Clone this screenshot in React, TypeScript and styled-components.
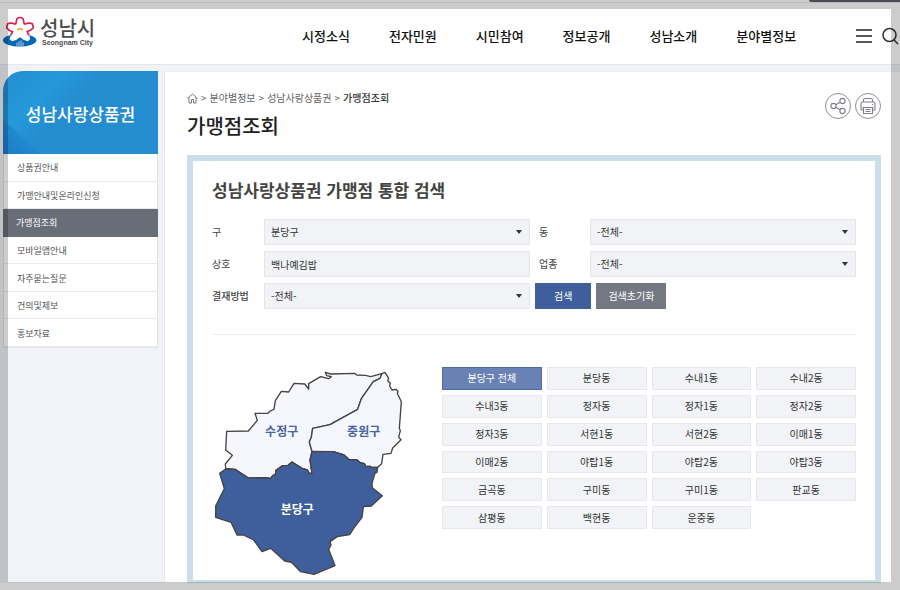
import React from "react";
import styled, { createGlobalStyle, css } from "styled-components";

const GlobalStyle = createGlobalStyle`
  *, *::before, *::after { box-sizing: border-box; }
  body {
    margin: 0;
    background: #fff;
    color: #444;
    font-family: "Noto Sans CJK KR", "Noto Sans", sans-serif;
    font-size: 10px;
    line-height: 16px;
  }
  button, input, select { font: inherit; color: inherit; }
  a { color: inherit; text-decoration: none; }
  h1, h2, ul, ol { margin: 0; padding: 0; }
  ul, ol { list-style: none; }
`;

const Page = styled.div`
  display: flex;
  flex-direction: column;
  min-height: 100vh;
  padding-bottom: 7px;
`;

const Frame = styled.div`
  position: fixed;
  inset: 0;
  border: solid rgba(0, 0, 0, 0.2);
  border-width: 9px 9px 8px 8px;
  pointer-events: none;
`;

const TopStrip = styled.div`
  display: flex;
  justify-content: flex-end;
  height: 3px;
  border-bottom: 1px solid #ececec;
`;

const TopTab = styled.div`
  width: 91px;
  height: 2px;
  border-bottom-left-radius: 2px;
  background: #5e5e70;
`;

const Header = styled.header`
  display: flex;
  align-items: center;
  height: 62px;
  padding: 4px 1px 0 3px;
  border-bottom: 1px solid #e5e8ee;
`;

const Logo = styled.a`
  display: flex;
  align-items: center;
  gap: 3px;
  margin-top: -8px;
`;

const LogoText = styled.span`
  display: flex;
  flex-direction: column;
  color: #4d4d4f;
`;

const LogoName = styled.span`
  font-size: 20px;
  line-height: 22px;
  font-weight: 500;
`;

const LogoSub = styled.span`
  padding-left: 2px;
  font-family: "Liberation Sans", Arial, sans-serif;
  font-size: 7px;
  line-height: 8px;
  font-weight: 700;
`;

const MainNav = styled.nav`
  flex: 1;
  display: flex;
  justify-content: center;
  gap: 39px;
  padding-left: 147px;
  color: #111;
  font-size: 13px;
  line-height: 20px;
  font-weight: 500;
  white-space: nowrap;
`;

const Tools = styled.div`
  display: flex;
  align-items: center;
  gap: 9px;
`;

const IconButton = styled.button`
  display: flex;
  padding: 0;
  border: 0;
  background: none;
  color: #333;
  cursor: pointer;
`;

const RoundButton = styled(IconButton)`
  align-items: center;
  justify-content: center;
  width: 26px;
  height: 26px;
  border: 1px solid #8d9095;
  border-radius: 50%;
  color: #7c8087;
`;

const Body = styled.div`
  flex: 1;
  display: flex;
  background: #f2f3f8;
`;

const Sidebar = styled.aside`
  flex: 0 0 164px;
  padding: 6px 6px 0 3px;
`;

const Banner = styled.h2`
  display: flex;
  align-items: center;
  justify-content: center;
  height: 83px;
  padding-top: 2px;
  border-top-left-radius: 20px;
  background:
    linear-gradient(43deg, #1d7cc6 0, #2189cf 25px, transparent 26px),
    linear-gradient(135deg, #248dd0 0, #2499da 45px, #248dd0 70px);
  color: #fff;
  font-size: 17px;
  line-height: 24px;
  font-weight: 500;
`;

const SideList = styled.ul`
  display: grid;
  grid-auto-rows: 1fr;
  height: 194px;
  border: 1px solid #e2e4e8;
  border-top: 0;
  background: #fff;
`;

const SideLink = styled.a<{ $active?: boolean }>`
  display: flex;
  align-items: center;
  height: 100%;
  padding: 2px 0 0 13px;
  border-bottom: 1px solid #e9eaec;
  color: #555;
  font-size: 9px;
  ${(p) =>
    p.$active &&
    css`
      margin: 0 -1px;
      background: #696d78;
      border-color: #696d78;
      color: #fff;
    `}
`;

const Main = styled.main`
  flex: 1;
  min-width: 0;
  display: flex;
  flex-direction: column;
  margin-top: 6px;
  padding: 18px 19px 0 22px;
  border-left: 1px solid #e4e6e9;
  border-top: 1px solid #f0f0f2;
  background: #fff;
`;

const TitleRow = styled.div`
  display: flex;
  justify-content: space-between;
  align-items: flex-start;
  height: 65px;
`;

const Crumbs = styled.ol`
  display: flex;
  align-items: center;
  gap: 3px;
  height: 16px;
  color: #666;
`;

const Crumb = styled.li<{ $current?: boolean }>`
  display: flex;
  font-weight: ${(p) => (p.$current ? 500 : 400)};
  color: ${(p) => (p.$current ? "#333" : "inherit")};
`;

const Title = styled.h1`
  margin-top: 5px;
  color: #222;
  font-size: 20px;
  line-height: 30px;
  font-weight: 500;
`;

const RoundGroup = styled.div`
  display: flex;
  gap: 4px;
  padding-top: 3px;
`;

const Panel = styled.section`
  flex: 1;
  padding: 17px 19px 0;
  border: solid #cbdfe8;
  border-width: 6px 6px 3px;
`;

const PanelTitle = styled.h2`
  margin-bottom: 17px;
  color: #444;
  font-size: 17px;
  line-height: 24px;
  font-weight: 700;
`;

const Form = styled.form`
  display: grid;
  grid-template-columns: 52px 1fr 60px 1fr;
  grid-auto-rows: 26px;
  row-gap: 6px;
  align-items: center;
  padding-bottom: 25px;
  border-bottom: 1px solid #ececee;
`;

const Label = styled.label<{ $inset?: boolean; $strong?: boolean }>`
  padding-left: ${(p) => (p.$inset ? 9 : 0)}px;
  font-weight: ${(p) => (p.$strong ? 500 : 400)};
`;

const field = css`
  display: block;
  width: 100%;
  height: 26px;
  padding: 0 6px;
  border: 1px solid #e3e5e8;
  border-radius: 1px;
  background: #f2f3f7;
  color: #333;
  outline: none;
`;

const TextInput = styled.input`
  ${field}
`;

const SelectBox = styled.div`
  position: relative;
  &::after {
    content: "";
    position: absolute;
    right: 8px;
    top: 11px;
    border: solid transparent;
    border-width: 4px 3px 0;
    border-top-color: #333;
    pointer-events: none;
  }
`;

const Select = styled.select`
  ${field}
  appearance: none;
`;

const Actions = styled.div`
  grid-column: span 2;
  display: flex;
  gap: 5px;
  padding-left: 5px;
`;

const ActionButton = styled.button<{ $primary?: boolean }>`
  height: 26px;
  padding: 0 ${(p) => (p.$primary ? 19 : 12)}px;
  border: 0;
  background: ${(p) => (p.$primary ? "#3f5f9c" : "#747882")};
  color: #fff;
  cursor: pointer;
`;

const Results = styled.div`
  display: grid;
  grid-template-columns: 230px 1fr;
  align-items: start;
  padding-top: 32px;
`;

const MapSvg = styled.svg`
  display: block;
  margin-top: 3px;
  width: 192px;
  height: 206px;
`;

const District = styled.path<{ $active?: boolean }>`
  fill: ${(p) => (p.$active ? "#3f5f9c" : "#f6f7fc")};
  stroke: #444;
  stroke-width: 4;
  stroke-linejoin: round;
`;

const DistrictName = styled.text<{ $active?: boolean }>`
  fill: ${(p) => (p.$active ? "#fff" : "#48659f")};
  font-size: 36px;
  font-weight: 700;
  text-anchor: middle;
`;

const DongGrid = styled.div`
  display: grid;
  grid-template-columns: repeat(4, 1fr);
  grid-auto-rows: 1fr;
  gap: 5px;
  height: 162px;
`;

const DongButton = styled.button<{ $active?: boolean }>`
  padding: 0;
  border: 1px solid ${(p) => (p.$active ? "#4c6ba6" : "#e6e8eb")};
  background: ${(p) => (p.$active ? "#6882b5" : "#f2f3f7")};
  color: ${(p) => (p.$active ? "#fff" : "#333")};
  line-height: 14px;
  cursor: pointer;
`;

const navItems = ["시정소식", "전자민원", "시민참여", "정보공개", "성남소개", "분야별정보"];
const sideItems = ["상품권안내", "가맹안내및온라인신청", "가맹점조회", "모바일앱안내", "자주묻는질문", "건의및제보", "홍보자료"];
const dongs = [
  "분당구 전체", "분당동", "수내1동", "수내2동",
  "수내3동", "정자동", "정자1동", "정자2동",
  "정자3동", "서현1동", "서현2동", "이매1동",
  "이매2동", "야탑1동", "야탑2동", "야탑3동",
  "금곡동", "구미동", "구미1동", "판교동",
  "삼평동", "백현동", "운중동",
];

const SUJEONG =
  "M77 355 76 342 97 316 77 300 80 244 145 243 172 211 165 190 204 190 210 183 222 178 226 152 244 124 266 126 282 100 314 102 326 117 326 101 362 80 386 86 394 80 380 77 376 67 392 72 464 70 470 75 496 76 512 80 546 71 540 85 520 95 484 146 473 178 390 224 338 235 334 262 328 276 336 305 330 330 336 370 328 370 322 360 306 355 276 336 264 346 248 347 228 361 226 374 219 376 211 386 204 384 143 383 105 358Z";
const JUNGWON =
  "M546 71 555 67 566 85 563 93 571 99 569 108 576 120 588 118 594 124 592 130 604 155 598 235 601 242 596 262 603 269 578 294 573 310 549 313 545 341 533 352 513 352 510 349 497 349 493 341 481 338 470 329 448 329 432 315 400 305 336 304 328 276 334 262 338 235 390 224 473 178 484 146 520 95 540 85Z";
const BUNDANG =
  "M77 357 105 358 143 383 204 384 211 386 219 376 226 374 228 361 248 347 264 346 276 336 306 355 322 360 328 370 336 370 330 330 336 304 400 305 432 315 448 329 470 329 481 338 493 341 497 349 510 349 513 352 533 352 531 367 525 369 516 400 517 413 547 437 514 468 490 470 486 502 466 528 449 554 412 560 390 575 393 585 386 598 405 647 342 673 302 665 274 637 254 633 212 595 186 605 161 570 130 555 111 555 93 517 47 502 47 468 73 416 59 370Z";

function CityMark() {
  return (
    <svg width="34" height="32" viewBox="0 0 102 96" aria-hidden="true">
      <ellipse cx="50" cy="73" rx="50" ry="19" fill="#0968b3" />
      <path
        d="M42 8Q50 1 60 8L64 25Q78 19 88 23L91 35Q84 44 72 47Q81 58 81 70L75 76Q61 74 51 64Q40 74 27 76L20 70Q21 57 29 47Q17 44 11 35L14 23Q24 19 38 25Z"
        fill="#fff"
      />
      <g fill="none" stroke="#d91f4d" strokeWidth="5" strokeLinejoin="round">
        <path d="M38 25 42 8Q50 1 60 8L64 25" />
        <path d="M38 25Q24 19 14 23L11 35Q17 44 29 47L23 58" />
        <path d="M64 25Q78 19 88 23L91 35Q84 44 72 47L78 58" />
      </g>
      <path d="M42 38Q50 34 60 38V43Q50 39 42 43Z" fill="#f7a51c" />
      <path d="M42 80V91M48 76V93M54 73V93M60 79V91" stroke="#fff" strokeWidth="2" />
    </svg>
  );
}

function HomeIcon() {
  return (
    <svg width="11" height="11" viewBox="0 0 22 22" fill="none" stroke="#777" strokeWidth="2" aria-hidden="true">
      <path d="M1 11 11 2 21 11M4 9V20H9V13H13V20H18V9" />
    </svg>
  );
}

function MenuIcon() {
  return (
    <svg width="16" height="14" viewBox="0 0 16 14" stroke="#222" strokeWidth="1.3" aria-hidden="true">
      <path d="M0 1H16M0 7H16M0 13H16" />
    </svg>
  );
}

function SearchIcon() {
  return (
    <svg width="18" height="18" viewBox="0 0 18 18" fill="none" stroke="#333" strokeWidth="1.5" aria-hidden="true">
      <circle cx="8.500" cy="8" r="6.500" />
      <path d="M13 13 17 17" />
    </svg>
  );
}

function ShareIcon() {
  return (
    <svg width="16" height="18" viewBox="0 0 16 18" fill="none" stroke="currentColor" strokeWidth="1.1" aria-hidden="true">
      <circle cx="3.5" cy="9" r="2.6" />
      <circle cx="12.5" cy="4" r="2.6" />
      <circle cx="12.5" cy="14" r="2.6" />
      <path d="M5.8 7.8 10.2 5.3M5.8 10.2 10.2 12.7" />
    </svg>
  );
}

function PrintIcon() {
  return (
    <svg width="16" height="18" viewBox="0 0 16 18" fill="none" stroke="currentColor" strokeWidth="1.1" aria-hidden="true">
      <path d="M3.5 5V3Q3.5 1.5 5 1.5H11Q12.5 1.5 12.5 3V5" />
      <path d="M3.5 13H2Q1 13 1 12V7Q1 5 3 5H13Q15 5 15 7V12Q15 13 14 13H12.5" />
      <path d="M2.5 10.5H13.5M3.5 10.5V16.5H12.5V10.5M5.5 12.5H10.5M5.5 14.5H10.5M12 7.5H13" />
    </svg>
  );
}

function SelectField({ id, value }: { id: string; value: string }) {
  return (
    <SelectBox>
      <Select id={id} defaultValue={value}>
        <option>{value}</option>
      </Select>
    </SelectBox>
  );
}

export default function App() {
  return (
    <>
      <GlobalStyle />
      <Page lang="ko">
        <TopStrip>
          <TopTab />
        </TopStrip>
        <Header>
          <Logo href="#">
            <CityMark />
            <LogoText>
              <LogoName>성남시</LogoName>
              <LogoSub>Seongnam City</LogoSub>
            </LogoText>
          </Logo>
          <MainNav>
            {navItems.map((item) => (
              <a href="#" key={item}>{item}</a>
            ))}
          </MainNav>
          <Tools>
            <IconButton aria-label="전체메뉴"><MenuIcon /></IconButton>
            <IconButton aria-label="통합검색"><SearchIcon /></IconButton>
          </Tools>
        </Header>
        <Body>
          <Sidebar>
            <Banner>성남사랑상품권</Banner>
            <SideList>
              {sideItems.map((item, i) => (
                <li key={item}>
                  <SideLink href="#" $active={i === 2}>{item}</SideLink>
                </li>
              ))}
            </SideList>
          </Sidebar>
          <Main>
            <TitleRow>
              <div>
                <Crumbs>
                  <Crumb><HomeIcon /></Crumb>
                  <li>&gt;</li>
                  <Crumb>분야별정보</Crumb>
                  <li>&gt;</li>
                  <Crumb>성남사랑상품권</Crumb>
                  <li>&gt;</li>
                  <Crumb $current>가맹점조회</Crumb>
                </Crumbs>
                <Title>가맹점조회</Title>
              </div>
              <RoundGroup>
                <RoundButton aria-label="공유"><ShareIcon /></RoundButton>
                <RoundButton aria-label="인쇄"><PrintIcon /></RoundButton>
              </RoundGroup>
            </TitleRow>
            <Panel>
              <PanelTitle>성남사랑상품권 가맹점 통합 검색</PanelTitle>
              <Form onSubmit={(e) => e.preventDefault()}>
                <Label htmlFor="gu">구</Label>
                <SelectField id="gu" value="분당구" />
                <Label htmlFor="dong" $inset>동</Label>
                <SelectField id="dong" value="-전체-" />
                <Label htmlFor="shop">상호</Label>
                <TextInput id="shop" defaultValue="백나예김밥" />
                <Label htmlFor="type" $inset>업종</Label>
                <SelectField id="type" value="-전체-" />
                <Label htmlFor="pay" $strong>결재방법</Label>
                <SelectField id="pay" value="-전체-" />
                <Actions>
                  <ActionButton type="submit" $primary>검색</ActionButton>
                  <ActionButton type="reset">검색초기화</ActionButton>
                </Actions>
              </Form>
              <Results>
                <MapSvg viewBox="36 60 576 618" role="img" aria-label="성남시 지도">
                  <District d={SUJEONG} />
                  <District d={JUNGWON} />
                  <District d={BUNDANG} $active />
                  <DistrictName x="245" y="258">수정구</DistrictName>
                  <DistrictName x="491" y="258">중원구</DistrictName>
                  <DistrictName x="292" y="491" $active>분당구</DistrictName>
                </MapSvg>
                <DongGrid>
                  {dongs.map((dong, i) => (
                    <DongButton type="button" key={dong} $active={i === 0}>{dong}</DongButton>
                  ))}
                </DongGrid>
              </Results>
            </Panel>
          </Main>
        </Body>
      </Page>
      <Frame />
    </>
  );
}
